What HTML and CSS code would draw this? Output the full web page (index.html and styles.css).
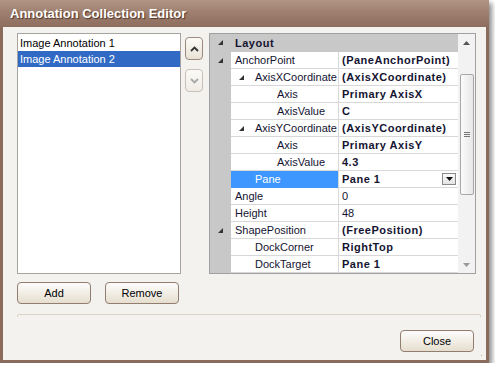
FILE: index.html
```html
<!DOCTYPE html>
<html>
<head>
<meta charset="utf-8">
<link rel="stylesheet" href="styles.css">
</head>
<body>
<div class="window">
  <div class="titlebar">Annotation Collection Editor</div>
  <div class="client">
    <div class="main">
      <div class="listbox">
        <div class="item">Image Annotation 1</div>
        <div class="item selected">Image Annotation 2</div>
      </div>
      <div class="movers">
        <div class="mv up"><svg width="9" height="6" viewBox="0 0 9 6"><polyline points="1,5 4.5,1.5 8,5" fill="none" stroke="#333" stroke-width="1.8"/></svg></div>
        <div class="mv down"><svg width="9" height="6" viewBox="0 0 9 6"><polyline points="1,1 4.5,4.5 8,1" fill="none" stroke="#a8a8a8" stroke-width="1.8"/></svg></div>
      </div>
      <div class="pgrid">
        <div class="rows">
          <div class="row cat-row">
            <div class="cat"><svg class="tri" width="5" height="5" viewBox="0 0 5 5"><polygon points="5,0 5,5 0,5" fill="#333"/></svg></div>
            <div class="cat-label">Layout</div>
          </div>
          <div class="row">
            <div class="cat"><svg class="tri" width="5" height="5" viewBox="0 0 5 5"><polygon points="5,0 5,5 0,5" fill="#333"/></svg></div>
            <div class="name l1">AnchorPoint</div>
            <div class="val b">(PaneAnchorPoint)</div>
          </div>
          <div class="row">
            <div class="cat"></div>
            <div class="name l2"><svg class="tri2" width="5" height="5" viewBox="0 0 5 5"><polygon points="5,0 5,5 0,5" fill="#333"/></svg>AxisXCoordinate</div>
            <div class="val b">(AxisXCoordinate)</div>
          </div>
          <div class="row">
            <div class="cat"></div>
            <div class="name l3">Axis</div>
            <div class="val b">Primary AxisX</div>
          </div>
          <div class="row">
            <div class="cat"></div>
            <div class="name l3">AxisValue</div>
            <div class="val b">C</div>
          </div>
          <div class="row">
            <div class="cat"></div>
            <div class="name l2"><svg class="tri2" width="5" height="5" viewBox="0 0 5 5"><polygon points="5,0 5,5 0,5" fill="#333"/></svg>AxisYCoordinate</div>
            <div class="val b">(AxisYCoordinate)</div>
          </div>
          <div class="row">
            <div class="cat"></div>
            <div class="name l3">Axis</div>
            <div class="val b">Primary AxisY</div>
          </div>
          <div class="row">
            <div class="cat"></div>
            <div class="name l3">AxisValue</div>
            <div class="val b">4.3</div>
          </div>
          <div class="row">
            <div class="cat"></div>
            <div class="name l2 sel">Pane</div>
            <div class="val b drop"><span>Pane 1</span><span class="ddbtn"><svg width="7" height="4" viewBox="0 0 7 4"><polygon points="0,0 7,0 3.5,4" fill="#111"/></svg></span></div>
          </div>
          <div class="row">
            <div class="cat"></div>
            <div class="name l1">Angle</div>
            <div class="val">0</div>
          </div>
          <div class="row">
            <div class="cat"></div>
            <div class="name l1">Height</div>
            <div class="val">48</div>
          </div>
          <div class="row">
            <div class="cat"><svg class="tri" width="5" height="5" viewBox="0 0 5 5"><polygon points="5,0 5,5 0,5" fill="#333"/></svg></div>
            <div class="name l1">ShapePosition</div>
            <div class="val b">(FreePosition)</div>
          </div>
          <div class="row">
            <div class="cat"></div>
            <div class="name l2">DockCorner</div>
            <div class="val b">RightTop</div>
          </div>
          <div class="row">
            <div class="cat"></div>
            <div class="name l2">DockTarget</div>
            <div class="val b">Pane 1</div>
          </div>
        </div>
        <div class="vscroll">
          <div class="arrow"><svg width="7" height="4" viewBox="0 0 7 4"><polygon points="0,4 7,4 3.5,0" fill="#555"/></svg></div>
          <div class="track">
            <div class="thumb"><span class="grip"></span></div>
          </div>
          <div class="arrow"><svg width="7" height="4" viewBox="0 0 7 4"><polygon points="0,0 7,0 3.5,4" fill="#999"/></svg></div>
        </div>
      </div>
    </div>
    <div class="actions">
      <div class="btn">Add</div>
      <div class="btn">Remove</div>
    </div>
    <div class="sep"></div>
    <div class="footer">
      <div class="btn">Close</div>
    </div>
    <div class="grip-corner"></div>
  </div>
</div>
</body>
</html>
```

FILE: styles.css
```css
* { box-sizing: border-box; }
body {
  margin: 0;
  background: #ffffff;
  font-family: "Liberation Sans", Arial, sans-serif;
  font-size: 11px;
  color: #141432;
}
.window {
  width: 489px;
  height: 363px;
  border: 3px solid #8b6c5c;
  border-top: 0;
  box-shadow: 3px 3px 5px rgba(0,0,0,0.45);
  display: flex;
  flex-direction: column;
  background: #f4f2ee;
}
.titlebar {
  height: 27px;
  margin: 0 -3px;
  padding: 6px 0 0 10px;
  background: linear-gradient(to bottom, #b09585 0%, #9f8070 45%, #8d6d5d 100%);
  color: #fff;
  font-weight: bold;
  font-size: 13px;
  text-shadow: 1px 1px 1px #4e3428;
}
.client {
  position: relative;
  flex: 1;
  padding: 6px 10px 0 14px;
  display: flex;
  flex-direction: column;
}
.main {
  display: flex;
  height: 241px;
}
.listbox {
  width: 164px;
  border: 1px solid #a7a3a0;
  background: #fff;
  padding-top: 1px;
}
.item {
  height: 16px;
  line-height: 16px;
  padding-left: 2px;
  color: #000;
}
.item.selected {
  background: #316ac5;
  color: #fff;
}
.movers {
  width: 18px;
  margin: 4px 6px 0 4px;
  display: flex;
  flex-direction: column;
  gap: 9px;
}
.mv {
  height: 23px;
  border: 1px solid #9a8a7e;
  border-radius: 4px;
  background: linear-gradient(to bottom, #fcfbf8, #e9e2d5);
  display: flex;
  align-items: center;
  justify-content: center;
}
.mv.down {
  border-color: #c8c0b8;
  background: linear-gradient(to bottom, #fbfaf8, #f0ece5);
}
.pgrid {
  width: 267px;
  border: 1px solid #a0a0a0;
  display: flex;
  background: #c8c8c8;
}
.rows {
  width: 248px;
  display: flex;
  flex-direction: column;
}
.row {
  display: flex;
  height: 17px;
}
.cat {
  width: 21px;
  background: #c8c8c8;
  position: relative;
}
.tri {
  position: absolute;
  left: 8px;
  top: 6px;
}
.cat-row {
  height: 18px;
  background: #c8c8c8;
}
.cat-label {
  font-weight: bold;
  letter-spacing: 0.5px;
  padding-left: 4px;
  line-height: 18px;
}
.name {
  width: 107px;
  background: #fff;
  border-bottom: 1px solid #d8d8d8;
  line-height: 16px;
  white-space: nowrap;
  overflow: hidden;
  position: relative;
}
.name.l1 { padding-left: 4px; }
.name.l2 { padding-left: 24px; }
.name.l3 { padding-left: 46px; }
.tri2 {
  position: absolute;
  left: 8px;
  top: 6px;
}
.name.sel {
  background: #3d97ff;
  color: #fff;
  border-bottom-color: #3d97ff;
}
.val {
  width: 120px;
  background: #fff;
  border-left: 1px solid #d8d8d8;
  border-bottom: 1px solid #d8d8d8;
  padding-left: 3px;
  line-height: 16px;
  white-space: nowrap;
  overflow: hidden;
}
.val.b { font-weight: bold; letter-spacing: 0.5px; }
.val.drop {
  display: flex;
  justify-content: space-between;
  align-items: center;
  padding-right: 2px;
}
.ddbtn {
  width: 14px;
  height: 12px;
  border: 1px solid #8a8a8a;
  background: linear-gradient(to bottom, #fafafa, #e4e4e4);
  display: flex;
  align-items: center;
  justify-content: center;
}
.vscroll {
  width: 17px;
  background: #f2f2f2;
  display: flex;
  flex-direction: column;
}
.arrow {
  height: 17px;
  display: flex;
  align-items: center;
  justify-content: center;
}
.track {
  flex: 1;
  padding: 23px 1px 0 2px;
}
.thumb {
  height: 121px;
  border: 1px solid #a8a8a8;
  border-radius: 2px;
  background: linear-gradient(to right, #fbfbfb, #e6e6e6);
  display: flex;
  align-items: center;
  justify-content: center;
}
.grip {
  width: 6px;
  height: 5px;
  border-top: 1px solid #777;
  border-bottom: 1px solid #777;
  background: linear-gradient(#777, #777) center / 6px 1px no-repeat;
}
.actions {
  display: flex;
  gap: 14px;
  margin-top: 8px;
}
.btn {
  width: 74px;
  height: 22px;
  border: 1px solid #927e71;
  border-radius: 4px;
  background: linear-gradient(to bottom, #fdfcfa 0%, #f2eee6 50%, #e6dece 100%);
  display: flex;
  align-items: center;
  justify-content: center;
  color: #000;
  font-size: 11px;
}
.sep {
  margin-top: 10px;
  width: 464px;
  height: 3px;
  border: 1px solid #ddd3c4;
  border-bottom: 0;
  border-radius: 2px 2px 0 0;
}
.footer {
  display: flex;
  justify-content: flex-end;
  margin-top: 13px;
  padding-right: 2px;
}
.grip-corner {
  position: absolute;
  right: 2px;
  bottom: 2px;
  width: 7px;
  height: 7px;
  background:
    radial-gradient(circle, #b0a89e 0.9px, transparent 1px) 0 0 / 3px 3px;
  clip-path: polygon(100% 0, 100% 100%, 0 100%);
}
```
